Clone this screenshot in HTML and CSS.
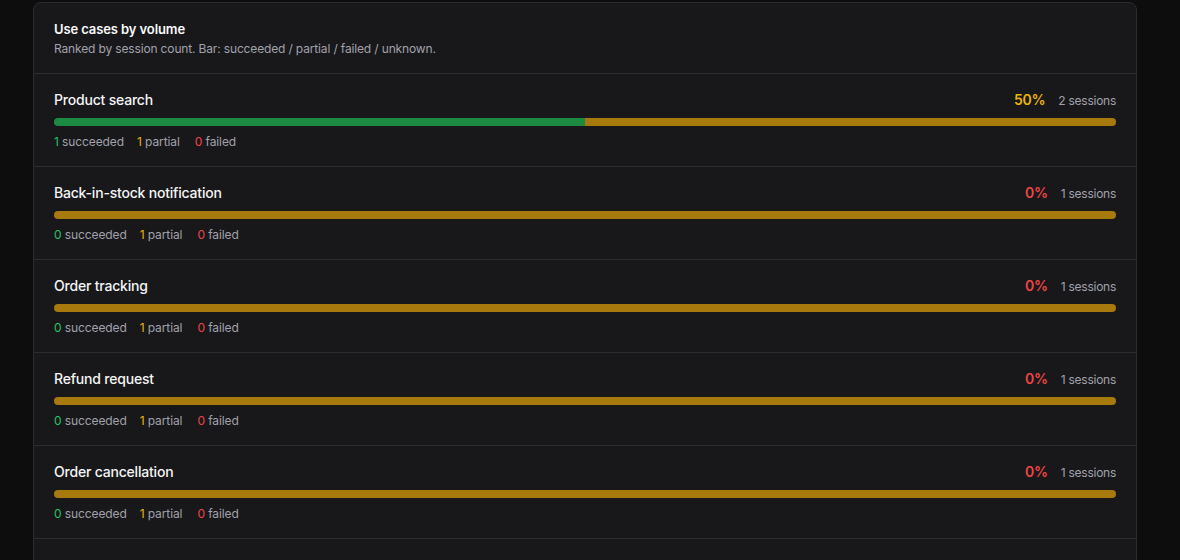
FILE: index.html
```html
<!DOCTYPE html>
<html lang="en">
<head>
<meta charset="utf-8">
<title>Use cases by volume</title>
<link rel="stylesheet" href="styles.css">
</head>
<body>
<section class="card">
  <header class="card-head">
    <h2 class="title">Use cases by volume</h2>
    <p class="subtitle">Ranked by session count. Bar: succeeded / partial / failed / unknown.</p>
  </header>
  <ul class="rows">
    <li class="row">
      <div class="row-top">
        <span class="name">Product search</span>
        <span class="meta"><span class="pct amber">50%</span><span class="sessions">2 sessions</span></span>
      </div>
      <div class="bar"><span class="seg seg-ok" style="width:50%"></span><span class="seg seg-partial" style="width:50%"></span></div>
      <div class="counts"><span><b class="green">1</b> succeeded</span><span><b class="amber">1</b> partial</span><span><b class="red">0</b> failed</span></div>
    </li>
    <li class="row">
      <div class="row-top">
        <span class="name">Back-in-stock notification</span>
        <span class="meta"><span class="pct red">0%</span><span class="sessions">1 sessions</span></span>
      </div>
      <div class="bar"><span class="seg seg-partial" style="width:100%"></span></div>
      <div class="counts"><span><b class="green">0</b> succeeded</span><span><b class="amber">1</b> partial</span><span><b class="red">0</b> failed</span></div>
    </li>
    <li class="row">
      <div class="row-top">
        <span class="name">Order tracking</span>
        <span class="meta"><span class="pct red">0%</span><span class="sessions">1 sessions</span></span>
      </div>
      <div class="bar"><span class="seg seg-partial" style="width:100%"></span></div>
      <div class="counts"><span><b class="green">0</b> succeeded</span><span><b class="amber">1</b> partial</span><span><b class="red">0</b> failed</span></div>
    </li>
    <li class="row">
      <div class="row-top">
        <span class="name">Refund request</span>
        <span class="meta"><span class="pct red">0%</span><span class="sessions">1 sessions</span></span>
      </div>
      <div class="bar"><span class="seg seg-partial" style="width:100%"></span></div>
      <div class="counts"><span><b class="green">0</b> succeeded</span><span><b class="amber">1</b> partial</span><span><b class="red">0</b> failed</span></div>
    </li>
    <li class="row">
      <div class="row-top">
        <span class="name">Order cancellation</span>
        <span class="meta"><span class="pct red">0%</span><span class="sessions">1 sessions</span></span>
      </div>
      <div class="bar"><span class="seg seg-partial" style="width:100%"></span></div>
      <div class="counts"><span><b class="green">0</b> succeeded</span><span><b class="amber">1</b> partial</span><span><b class="red">0</b> failed</span></div>
    </li>
  </ul>
</section>
</body>
</html>
```

FILE: styles.css
```css
html, body {
  margin: 0;
  padding: 0;
  background: #0d0d0e;
  height: 100%;
  overflow: hidden;
}
body {
  font-family: Inter, "Noto Sans", "Liberation Sans", sans-serif;
  color: #f4f4f5;
  padding: 2px 43px 0 33px;
}
.card {
  background: #18181b;
  border: 1px solid #2c2c30;
  border-radius: 8px;
  padding-bottom: 60px;
}
.card-head {
  padding: 16px 20px 16px;
  border-bottom: 1px solid #2c2c30;
}
.title {
  margin: 0;
  font-size: 13px;
  line-height: 20px;
  font-weight: 600;
  color: #fafafa;
  letter-spacing: -0.1px;
}
.subtitle {
  margin: 2px 0 0;
  font-size: 12px;
  line-height: 16px;
  color: #a1a1aa;
  letter-spacing: -0.15px;
}
.rows {
  list-style: none;
  margin: 0;
  padding: 0;
}
.row {
  padding: 16px 20px 16px;
  border-bottom: 1px solid #2c2c30;
}
.row-top {
  display: flex;
  justify-content: space-between;
  align-items: center;
  height: 20px;
}
.name {
  font-size: 14px;
  line-height: 20px;
  font-weight: 500;
  color: #f4f4f5;
  letter-spacing: -0.2px;
}
.meta {
  display: flex;
  align-items: baseline;
  gap: 13px;
}
.pct {
  font-size: 14px;
  font-weight: 600;
  line-height: 20px;
  letter-spacing: -0.3px;
}
.sessions {
  font-size: 12px;
  color: #a1a1aa;
  letter-spacing: -0.25px;
}
.bar {
  display: flex;
  height: 8px;
  margin-top: 8px;
  border-radius: 4px;
  overflow: hidden;
  background: #27272a;
}
.seg { display: block; height: 100%; }
.seg-ok { background: #1d8a41; }
.seg-partial { background: #a8790c; }
.counts {
  display: flex;
  gap: 13px;
  margin-top: 8px;
  font-size: 12px;
  line-height: 16px;
  color: #a1a1aa;
  letter-spacing: -0.1px;
}
.counts span:last-child { margin-left: 2px; }
.counts b { font-weight: 400; }
.green { color: #22c55e; }
.amber { color: #eab308; }
.red { color: #ef4444; }
```
